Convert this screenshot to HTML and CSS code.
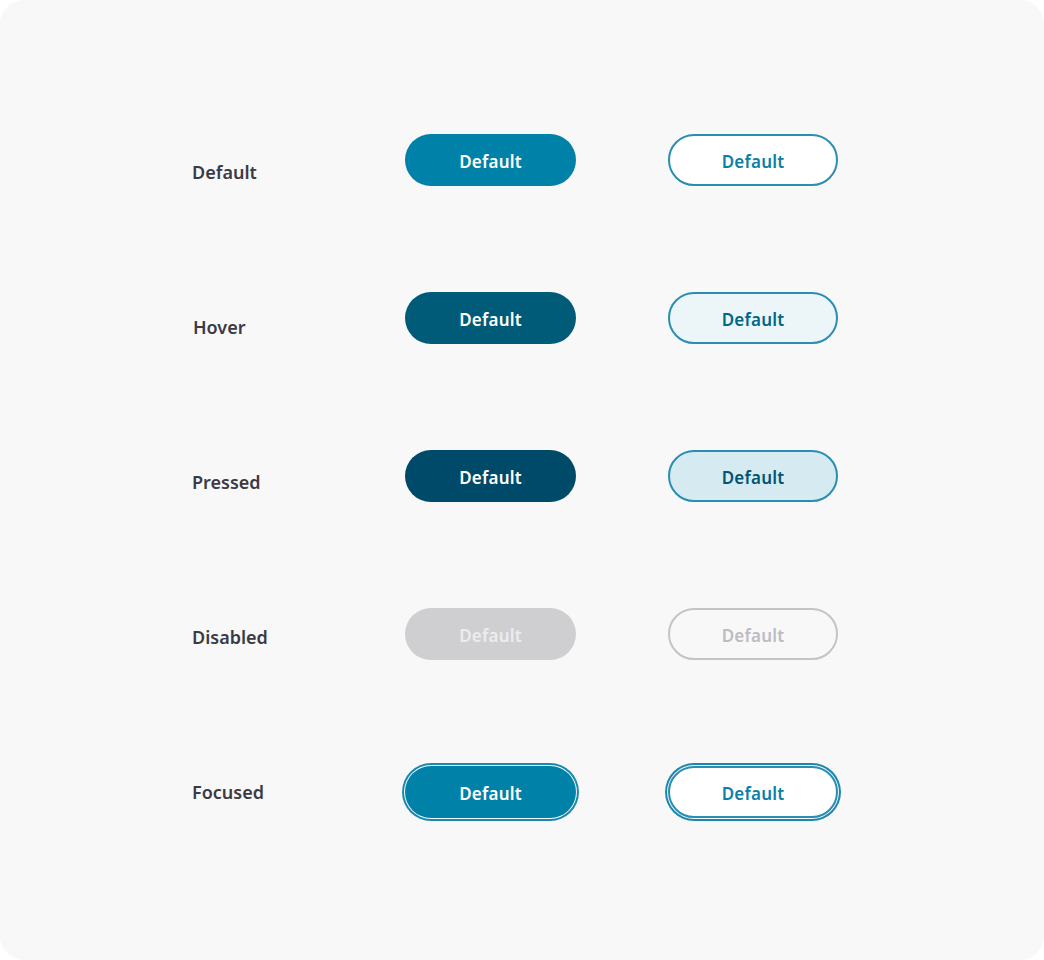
FILE: index.html
```html
<!DOCTYPE html>
<html lang="en">
<head>
    <meta charset="UTF-8">
    <meta name="viewport" content="width=device-width, initial-scale=1.0">
    <title>Button states</title>
    <link rel="stylesheet" href="styles.css">
</head>
<body>
    <div class="card">
        <div class="states">
            <div class="labels">
                <span class="label">Default</span>
                <span class="label">Hover</span>
                <span class="label">Pressed</span>
                <span class="label">Disabled</span>
                <span class="label">Focused</span>
            </div>

            <div class="col">
                <button class="btn filled">Default</button>
                <button class="btn filled hover">Default</button>
                <button class="btn filled pressed">Default</button>
                <button class="btn filled" disabled>Default</button>
                <button class="btn filled focused">Default</button>
            </div>

            <div class="col">
                <button class="btn outline">Default</button>
                <button class="btn outline hover">Default</button>
                <button class="btn outline pressed">Default</button>
                <button class="btn outline" disabled>Default</button>
                <button class="btn outline focused">Default</button>
            </div>
        </div>
    </div>
</body>
</html>
```

FILE: styles.css
```css
body {
    margin: 0;
    background: #ffffff;
    font-family: "Noto Sans", "Open Sans", sans-serif;
}
.card {
    height: 960px;
    background: #f8f8f8;
    border-radius: 24px;
    box-sizing: border-box;
    padding-top: 134px;
}
.states {
    display: grid;
    grid-template-columns: 213px 263px 170px;
    padding-left: 192px;
}
.labels {
    display: flex;
    flex-direction: column;
    gap: 131px;
    padding-top: 26px;
}
.label {
    font-size: 18px;
    line-height: 24px;
    font-weight: 600;
    color: #3b3a45;
}
.labels .label:nth-child(2) {
    padding-left: 1px;
}
.col {
    display: flex;
    flex-direction: column;
    align-items: flex-start;
    gap: 106px;
}
.btn {
    width: 171px;
    height: 52px;
    padding: 2px 0 0;
    border-radius: 26px;
    font-family: inherit;
    font-size: 17px;
    font-weight: 600;
    letter-spacing: 0.2px;
    cursor: pointer;
    box-sizing: border-box;
}

/* filled */
.filled {
    background: #0082a8;
    color: #ffffff;
    border: none;
}
.filled.hover {
    background: #005b79;
}
.filled.pressed {
    background: #004a69;
}
.filled:disabled {
    background: #cfcfd1;
    color: #ececec;
    cursor: default;
}
.filled.focused {
    box-shadow: 0 0 0 1px #f8f8f8, 0 0 0 3px #1a88ae;
}

/* outline */
.outline {
    width: 170px;
    background: #ffffff;
    color: #0a80a7;
    border: 2px solid #2a8db2;
}
.outline.hover {
    background: #ecf5f8;
    color: #00678a;
}
.outline.pressed {
    background: #d6eaf1;
    color: #005574;
}
.outline:disabled {
    background: transparent;
    border-color: #c4c4c6;
    color: #bcbcc2;
    cursor: default;
}
.outline.focused {
    box-shadow: 0 0 0 1px #f8f8f8, 0 0 0 3px #1a88ae;
}
```
